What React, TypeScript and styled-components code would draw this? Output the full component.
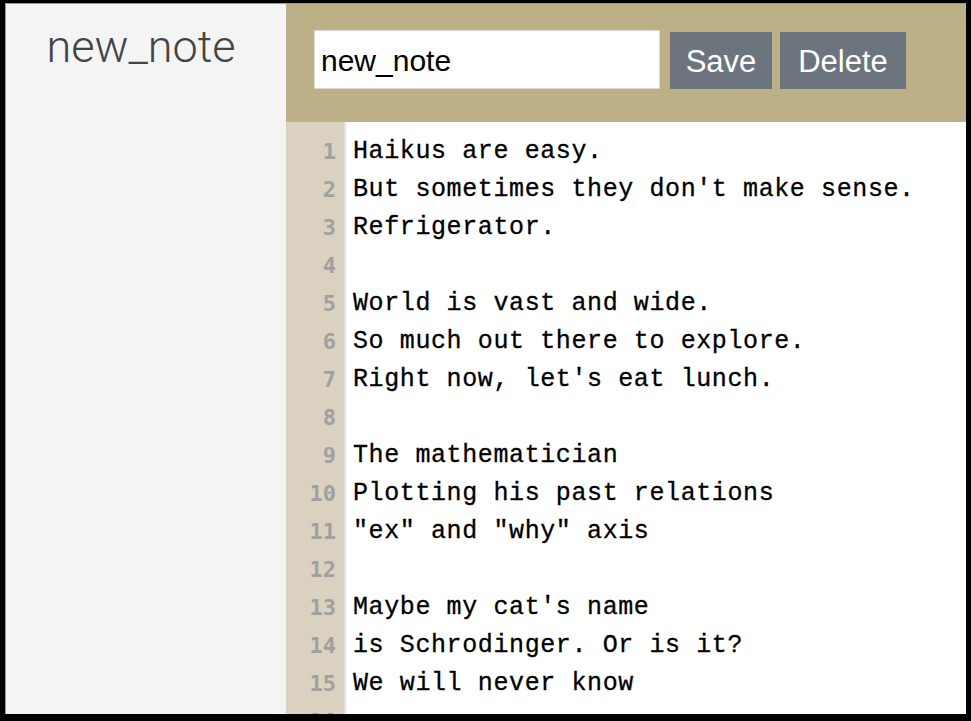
import React from "react";
import styled, { createGlobalStyle } from "styled-components";

const Global = createGlobalStyle`
  html, body { margin: 0; padding: 0; background: #000; }
  body { overflow: hidden; }
`;

const Frame = styled.div`
  margin: 3px 5px 0 5px;
  width: 961px;
  height: 711px;
  display: grid;
  grid-template-columns: 280px 1fr;
  background: #fff;
  overflow: hidden;
  box-sizing: border-box;
  border-left: 1px solid #9a9a9a;
  border-top: 1px solid #9a9a9a;
`;

const Sidebar = styled.aside`
  background: #f4f4f4;
  display: flex;
  justify-content: center;
  padding-top: 16px;
`;

const SideTitle = styled.div`
  font-family: Roboto, "Helvetica Neue", Arial, sans-serif;
  font-weight: 300;
  font-size: 45px;
  line-height: 54px;
  color: #444;
  margin-left: -10px;
`;

const Main = styled.main`
  display: flex;
  flex-direction: column;
  min-width: 0;
`;

const Toolbar = styled.div`
  background: #bdb087;
  height: 118px;
  box-sizing: border-box;
  padding: 26px 0 0 28px;
  display: flex;
  align-items: flex-start;
`;

const TitleInput = styled.input`
  box-sizing: border-box;
  width: 346px;
  height: 59px;
  border: 1px solid #d8d8d8;
  outline: 1px solid #fff;
  outline-offset: -2px;
  padding: 2px 6px 0;
  font-family: "Liberation Sans", Arial, sans-serif;
  font-size: 30px;
  color: #000;
  background: #fff;
  margin-right: 10px;
`;

const Button = styled.button<{ $w: number }>`
  box-sizing: border-box;
  width: ${(p) => p.$w}px;
  height: 57px;
  margin-top: 2px;
  margin-right: 8px;
  border: none;
  background: #6c757d;
  color: #fff;
  font-family: "Liberation Sans", Arial, sans-serif;
  font-size: 31px;
  padding: 2px 0 0;
`;

const Editor = styled.div`
  flex: 1;
  display: flex;
  overflow: hidden;
  background: #fff;
`;

const Gutter = styled.div`
  width: 58px;
  background: #dbd1c1;
  border-right: 2px solid #e2e2e2;
  padding-top: 11px;
  box-sizing: content-box;
`;

const LineNo = styled.div`
  height: 38px;
  line-height: 38px;
  text-align: right;
  padding-right: 8px;
  font-family: "DejaVu Sans Mono", "Liberation Mono", monospace;
  font-weight: bold;
  font-size: 22px;
  color: #a0a0a0;
`;

const Code = styled.div`
  flex: 1;
  padding: 11px 0 0 7px;
`;

const Line = styled.div`
  height: 38px;
  line-height: 38px;
  white-space: pre;
  font-family: "Liberation Mono", "Courier New", monospace;
  font-size: 25px;
  letter-spacing: 0.6px;
  color: #000;
  -webkit-text-stroke: 0.3px #000;
`;

const lines = [
  "Haikus are easy.",
  "But sometimes they don't make sense.",
  "Refrigerator.",
  "",
  "World is vast and wide.",
  "So much out there to explore.",
  "Right now, let's eat lunch.",
  "",
  "The mathematician",
  "Plotting his past relations",
  "\"ex\" and \"why\" axis",
  "",
  "Maybe my cat's name",
  "is Schrodinger. Or is it?",
  "We will never know",
  "",
];

export default function App() {
  return (
    <>
      <Global />
      <Frame>
        <Sidebar>
          <SideTitle>new_note</SideTitle>
        </Sidebar>
        <Main>
          <Toolbar>
            <TitleInput defaultValue="new_note" />
            <Button $w={102}>Save</Button>
            <Button $w={126}>Delete</Button>
          </Toolbar>
          <Editor>
            <Gutter>
              {lines.map((_, i) => (
                <LineNo key={i}>{i + 1}</LineNo>
              ))}
            </Gutter>
            <Code>
              {lines.map((l, i) => (
                <Line key={i}>{l || " "}</Line>
              ))}
            </Code>
          </Editor>
        </Main>
      </Frame>
    </>
  );
}
